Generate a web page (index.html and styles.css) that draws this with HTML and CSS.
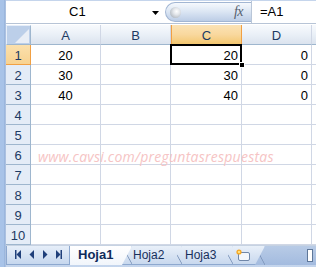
FILE: index.html
```html
<!DOCTYPE html>
<html>
<head>
<meta charset="utf-8">
<link rel="stylesheet" href="styles.css">
</head>
<body>
<div class="app">
  <div class="strip"></div>
  <div class="main">
    <div class="fbar">
      <div class="namebox">
        <span class="ref">C1</span>
        <svg class="dd" width="7" height="4" viewBox="0 0 7 4"><path d="M0 0H7L3.5 4Z" fill="#000"/></svg>
      </div>
      <div class="pill"><span class="ball"></span><span class="fx">fx</span></div>
      <div class="formula">=A1</div>
    </div>
    <div class="gap"></div>
    <div class="sheet">
      <div class="grid">
        <div class="corner"><svg width="14" height="14" viewBox="0 0 14 14"><path d="M14 0V14H0Z" fill="#e9eef6"/></svg></div>
        <div class="ch">A</div><div class="ch">B</div><div class="ch sel">C</div><div class="ch">D</div><div class="ch end"></div>

        <div class="rh sel">1</div><div class="c ctr">20</div><div class="c"></div><div class="c r active">20<span class="handle"></span></div><div class="c r">0</div><div class="c end"></div>
        <div class="rh">2</div><div class="c ctr">30</div><div class="c"></div><div class="c r">30</div><div class="c r">0</div><div class="c end"></div>
        <div class="rh">3</div><div class="c ctr">40</div><div class="c"></div><div class="c r">40</div><div class="c r">0</div><div class="c end"></div>
        <div class="rh">4</div><div class="c"></div><div class="c"></div><div class="c"></div><div class="c"></div><div class="c end"></div>
        <div class="rh">5</div><div class="c"></div><div class="c"></div><div class="c"></div><div class="c"></div><div class="c end"></div>
        <div class="rh">6</div><div class="c"></div><div class="c"></div><div class="c"></div><div class="c"></div><div class="c end"></div>
        <div class="rh">7</div><div class="c"></div><div class="c"></div><div class="c"></div><div class="c"></div><div class="c end"></div>
        <div class="rh">8</div><div class="c"></div><div class="c"></div><div class="c"></div><div class="c"></div><div class="c end"></div>
        <div class="rh">9</div><div class="c"></div><div class="c"></div><div class="c"></div><div class="c"></div><div class="c end"></div>
        <div class="rh">10</div><div class="c"></div><div class="c"></div><div class="c"></div><div class="c"></div><div class="c end"></div>
      </div>
      <div class="wm">www.cavsi.com/preguntasrespuestas</div>
    </div>
    <div class="tabbar">
      <div class="nav">
        <svg width="63" height="17" viewBox="0 0 63 17">
          <g fill="#1f3f7a">
            <rect x="8" y="4" width="1.5" height="9"/><path d="M14 4V13L9.5 8.5Z"/>
            <path d="M27 4V13L22.5 8.5Z"/>
            <path d="M36 4V13L40.5 8.5Z"/>
            <path d="M49 4V13L53.5 8.5Z"/><rect x="53.5" y="4" width="1.5" height="9"/>
          </g>
        </svg>
      </div>
      <div class="tab active">Hoja1</div>
      <div class="tab t2">Hoja2</div>
      <div class="tab t3">Hoja3</div>
      <div class="tab newtab">
        <svg width="16" height="14" viewBox="0 0 16 14">
          <rect x="3.5" y="4.5" width="11" height="8" rx="1.5" fill="#f4f7fb" stroke="#6f86a8"/>
          <circle cx="4" cy="4" r="2.6" fill="#f6a623"/>
          <circle cx="4" cy="4" r="1.3" fill="#ffe07a"/>
        </svg>
      </div>
      <div class="fill"></div>
      <div class="scroll"><span class="thumb"></span></div>
    </div>
  </div>
</div>
</body>
</html>
```

FILE: styles.css
```css
* { box-sizing: border-box; }
html, body { margin: 0; padding: 0; }
body {
  width: 316px;
  height: 267px;
  overflow: hidden;
  background: #fff;
  font-family: "Liberation Sans", Arial, sans-serif;
  font-size: 13px;
  color: #000;
}
.app { display: flex; height: 267px; }
.strip {
  width: 6px;
  background: linear-gradient(to right, #a8c3e8 0, #a8c3e8 4px, #8eaad3 5px, #c9d8ee 6px);
}
.main { flex: 1; display: flex; flex-direction: column; min-width: 0; }

.fbar {
  height: 24px;
  display: flex;
  border-top: 1px solid #c5d5ec;
  border-bottom: 1px solid #b7c4d6;
  background: #fff;
}
.namebox {
  width: 157px;
  display: flex;
  align-items: center;
  padding-left: 63px;
  position: relative;
}
.ref { line-height: 22px; }
.dd { position: absolute; left: 146px; top: 10px; }
.pill {
  width: 86px;
  margin: 1px 0 1px 2px;
  border: 1px solid #a2b6d3;
  border-right: none;
  border-radius: 11px 0 0 11px;
  background: linear-gradient(to bottom, #f6f9fd 0%, #dde7f4 45%, #bccde6 100%);
  display: flex;
  align-items: center;
  padding-left: 4px;
}
.ball {
  width: 11px;
  height: 11px;
  border-radius: 50%;
  background: radial-gradient(circle at 60% 40%, #ffffff 0, #e3e6ea 35%, #9aa3ad 100%);
}
.fx {
  margin-left: auto;
  margin-right: 8px;
  font-family: "Liberation Serif", "Times New Roman", serif;
  font-style: italic;
  font-size: 14px;
  color: #55606e;
  letter-spacing: -0.5px;
}
.formula {
  flex: 1;
  border-left: 1px solid #b9c6d8;
  padding-left: 8px;
  line-height: 22px;
}
.gap { height: 2px; background: #fff; }

.sheet { position: relative; }
.grid {
  display: grid;
  grid-template-columns: 25px 70px 70px 71px 70px 1fr;
  grid-auto-rows: 20px;
}
.corner {
  background: #bccfe9;
  border-right: 1px solid #9eb6ce;
  border-bottom: 1px solid #9eb6ce;
  border-top: 1px solid #e6eef9;
  border-left: 1px solid #e6eef9;
  display: flex;
  align-items: flex-end;
  justify-content: flex-end;
  padding: 0 1px 1px 0;
}
.corner svg { display: block; }
.ch {
  background: linear-gradient(to bottom, #f8fafd 0%, #eaf0f7 50%, #dbe3ee 100%);
  border-right: 1px solid #d0d7e5;
  border-bottom: 1px solid #9eb6ce;
  text-align: center;
  color: #1d3a63;
  line-height: 22px;
}
.ch.sel {
  background: linear-gradient(to bottom, #fbe3b5 0%, #f9d89e 50%, #f3c770 100%);
  border: 1px solid #f1a043;
  border-top: none;
}
.ch.end { border-right: none; }
.rh {
  background: #e4ecf7;
  border-right: 1px solid #9eb6ce;
  border-bottom: 1px solid #9eb6ce;
  color: #1d3a63;
  text-align: center;
  line-height: 21px;
}
.rh.sel {
  background: linear-gradient(to bottom, #fbe0ad, #f8d290);
  border-right: 1px solid #f1a043;
  border-bottom: 1px solid #f1a043;
}
.c {
  border-right: 1px solid #d0d7e5;
  border-bottom: 1px solid #d0d7e5;
  line-height: 21px;
  padding: 0 3px;
}
.c.end { border-right: none; }
.c.ctr { text-align: center; }
.c.r { text-align: right; }
.c.active { position: relative; }
.c.active::after {
  content: "";
  position: absolute;
  left: -1px;
  top: -1px;
  right: -1px;
  bottom: -1px;
  border: 2px solid #000;
  pointer-events: none;
}
.handle {
  position: absolute;
  right: -4px;
  bottom: -4px;
  width: 6px;
  height: 6px;
  background: #000;
  border: 1px solid #fff;
  z-index: 2;
}
.wm {
  position: absolute;
  left: 32px;
  top: 122px;
  font-family: "Open Sans", sans-serif;
  font-style: italic;
  font-size: 14px;
  color: #f6c4c4;
  white-space: nowrap;
  letter-spacing: 0.25px;
}

.tabbar {
  flex: 1;
  display: flex;
  align-items: stretch;
  background: linear-gradient(to bottom, #d6e2f2, #c3d4ec);
  border-top: 1px solid #c6d2e2;
  padding-bottom: 2px;
}
.nav {
  width: 64px;
  flex: none;
  border: 1px solid #8da8cf;
  border-top: none;
  background: linear-gradient(to bottom, #e6eef9, #c6d7ee);
}
.nav svg { display: block; }
.tab {
  position: relative;
  flex: none;
  margin-left: -9px;
  padding: 0 0 0 12px;
  background: linear-gradient(to bottom, #e9f0f9, #c8d8ee);
  clip-path: polygon(0 100%, 10px 0, 100% 0, 100% 100%);
  color: #17305c;
  font-size: 12px;
  line-height: 18px;
  border-bottom: 1px solid #8da8cf;
}
.tab::before {
  content: "";
  position: absolute;
  left: 0;
  top: 0;
  width: 10px;
  height: 100%;
  background: linear-gradient(to top right, transparent calc(50% - 0.8px), #7e96bb 50%, transparent calc(50% + 0.8px));
}
.tab.t2 { width: 59px; padding-left: 11px; }
.tab.t3 { width: 60px; padding-left: 13px; }
.tab.active {
  margin-left: 0;
  padding: 0 0 0 8px;
  background: linear-gradient(to bottom, #ffffff, #f1f5fb);
  clip-path: none;
  font-weight: bold;
  font-size: 13px;
  color: #0f2b5b;
  border-bottom: none;
  width: 61px;
}
.tab.active::before { display: none; }
.tab.newtab {
  width: 41px;
  padding: 2px 0 0 12px;
}
.tab.newtab svg { display: block; }
.fill {
  flex: 1;
  margin-left: -9px;
  background: linear-gradient(to bottom, #b8cbe6, #a3bbdf);
  clip-path: polygon(0 100%, 10px 0, 100% 0, 100% 100%);
  position: relative;
}
.fill::before {
  content: "";
  position: absolute;
  left: 0;
  top: 0;
  width: 10px;
  height: 100%;
  background: linear-gradient(to top right, transparent calc(50% - 0.8px), #7e96bb 50%, transparent calc(50% + 0.8px));
}
.scroll {
  width: 11px;
  flex: none;
  background: linear-gradient(to bottom, #b8cbe6, #a3bbdf);
  padding: 3px 0 3px 2px;
}
.thumb {
  display: block;
  width: 6px;
  height: 100%;
  background: #fff;
  border: 1px solid #5e7799;
}
```
